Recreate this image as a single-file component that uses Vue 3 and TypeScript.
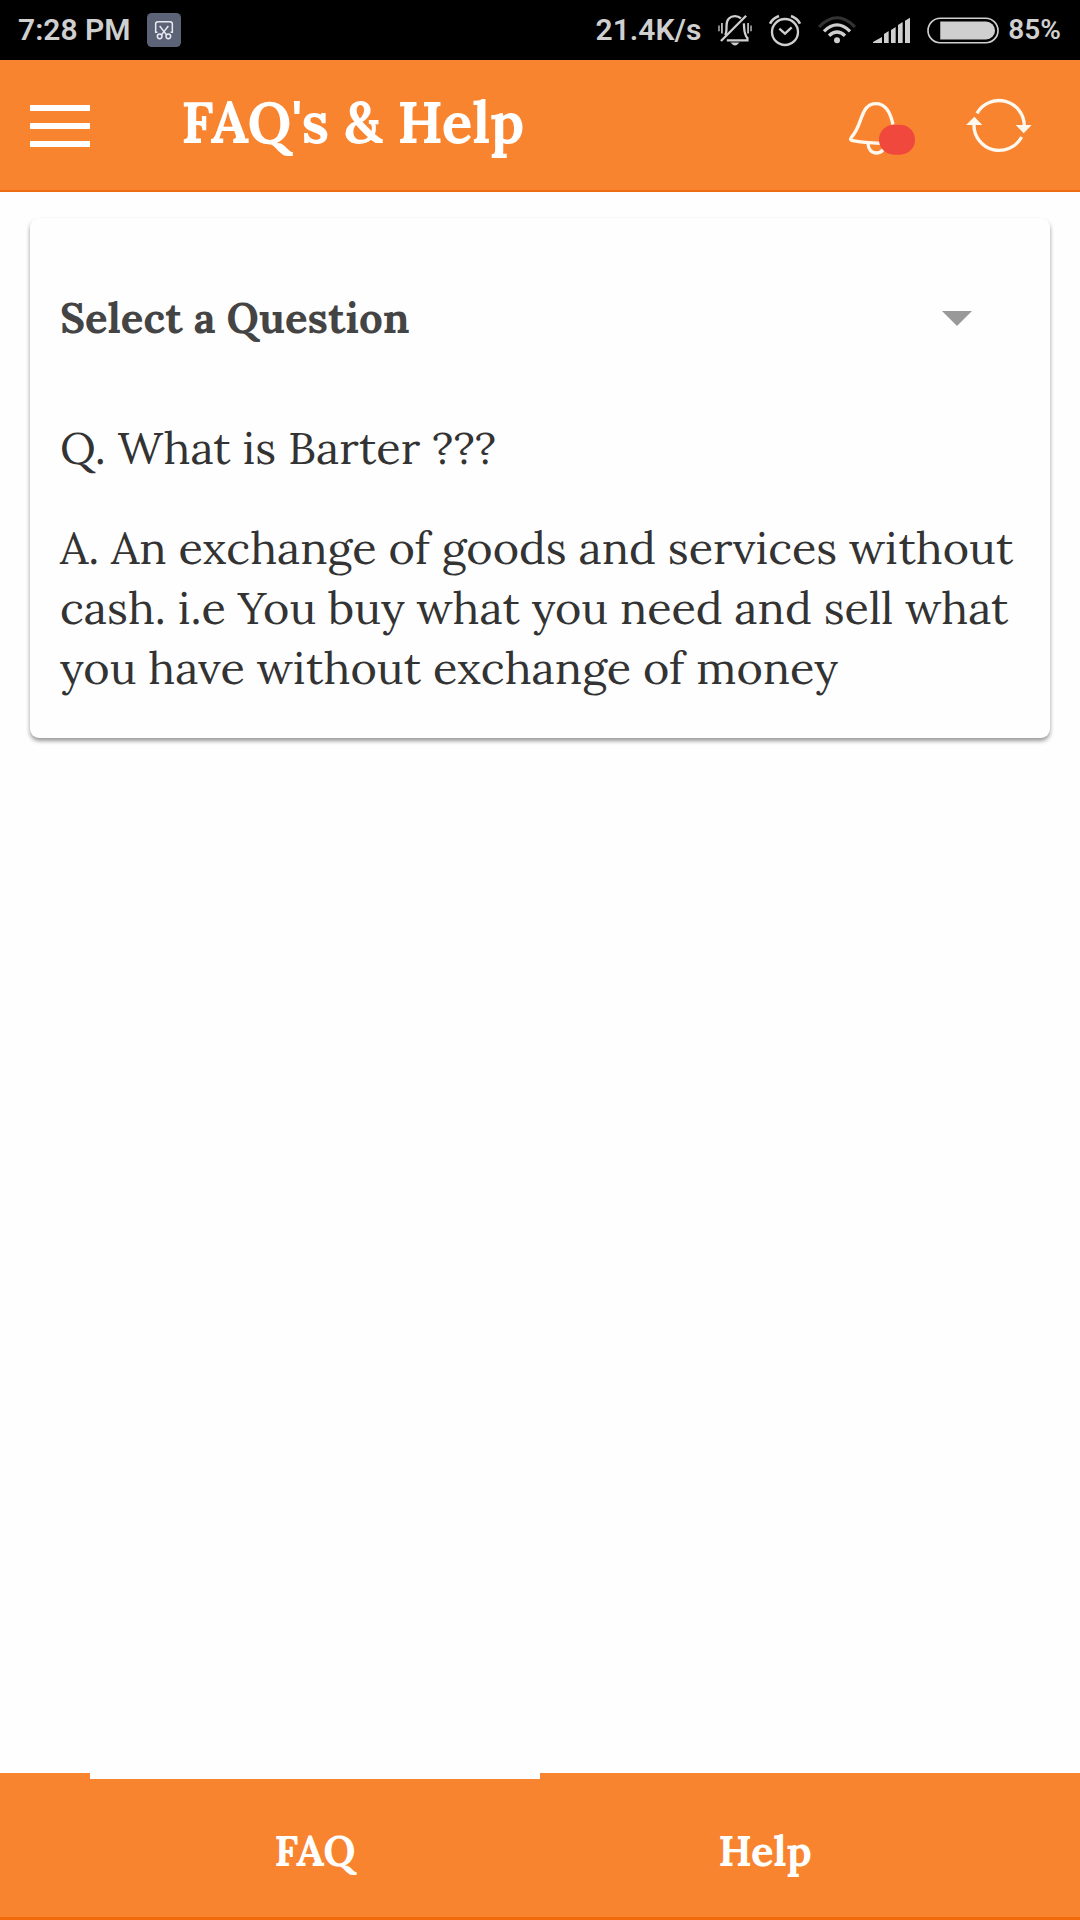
<script setup lang="ts">
import { ref } from 'vue'

interface Faq {
  question: string
  answer: string
}

const faq: Faq = {
  question: 'What is Barter ???',
  answer:
    'An exchange of goods and services without cash. i.e You buy what you need and sell what you have without exchange of money',
}

const tabs: string[] = ['FAQ', 'Help']
const activeTab = ref('FAQ')
const selected = ref('')
</script>

<template>
  <div class="screen">
    <div class="status">
      <span class="status-text">7:28 PM</span>
      <svg class="clip" viewBox="435 39 102 102" width="34" height="34" aria-hidden="true">
        <rect x="435" y="39" width="102" height="102" rx="14" fill="#5c6377" />
        <g fill="none" stroke="#e8ebf2" stroke-width="4.5">
          <path d="M466 97H461V72q0-7 7-7h36q7 0 7 7v25h-5" />
          <path d="M473 78l20 26M499 78l-20 26" />
          <circle cx="473" cy="109" r="7" />
          <circle cx="499" cy="109" r="7" />
        </g>
      </svg>
      <div class="status-right">
        <span class="status-text">21.4K/s</span>
        <svg viewBox="416 39 104 100" width="34" height="33" aria-hidden="true">
          <g fill="none" stroke="#cfcfcf" stroke-width="7">
            <path d="M438 103c5-8 4-18 4-28 0-20 11-30 26-30 8 0 14 3 18 7" />
            <path d="M495 67c2 16-1 32 11 45v7H443" />
            <path d="M425 121L502 44" />
            <path d="M428 66v32M508 66v32" stroke-width="5" />
            <path d="M419 74v17M517 74v17" stroke-width="4" />
          </g>
          <path d="M454 126h28q-14 17-28 0z" fill="#cfcfcf" />
        </svg>
        <svg viewBox="570 39 96 99" width="32" height="33" aria-hidden="true">
          <g fill="none" stroke="#cfcfcf" stroke-width="7">
            <circle cx="618" cy="93" r="39" />
            <path d="M601 83l17 15 20-19" />
            <path d="M573 68q8-16 27-23M663 68q-8-16-27-23" stroke-width="8" />
          </g>
        </svg>
        <svg viewBox="0 44 114 90" width="38" height="30" aria-hidden="true">
          <g fill="none" stroke="#cfcfcf" stroke-width="10">
            <path d="M3 80Q57 25 111 80" stroke="#333" stroke-width="9" />
            <path d="M18 93Q57 54 96 93" />
            <path d="M33 106Q57 84 81 106" />
          </g>
          <circle cx="57" cy="120" r="9" fill="#cfcfcf" />
        </svg>
        <svg viewBox="168 51 111 81" width="37" height="27" aria-hidden="true">
          <path
            d="M168 129v-3l27-15v18zM201 129v-27l14-9v36zM222 129V90l14-9v48zM243 129V75l14-9v63zM264 129V62l15-9v76z"
            fill="#cfcfcf"
          />
        </svg>
        <div class="power">
          <svg viewBox="323 50 217 80" width="72" height="27" aria-hidden="true">
            <rect x="326" y="53" width="211" height="74" rx="37" fill="none" stroke="#cfcfcf" stroke-width="5" />
            <path d="M363 63h138a27 27 0 0 1 0 54H363z" fill="#cfcfcf" />
          </svg>
          <span class="status-text battery">85%</span>
        </div>
      </div>
    </div>

    <header class="bar">
      <button class="icon-button" type="button" aria-label="Menu">
        <svg viewBox="0 -2 60 44" width="60" height="44">
          <path d="M0 3h60M0 21h60M0 39h60" stroke="#fff" stroke-width="6" />
        </svg>
      </button>
      <h1 class="title">FAQ's &amp; Help</h1>
      <div class="actions">
        <button class="icon-button" type="button" aria-label="Notifications">
          <svg viewBox="87 76 198 186" width="66" height="62">
            <g fill="none" stroke="#fff8ee" stroke-width="10" stroke-linejoin="round">
              <path d="M219 168C211 129 193 105 168 105c-27 0-36 20-46 48-8 23-15 39-27 52-5 6-4 10 3 11 27 5 55 7 84 8" />
              <path d="M144 224c1 18 11 29 25 29 9 0 16-4 21-10" />
            </g>
            <rect x="177" y="168" width="108" height="90" rx="45" fill="#f0483c" />
          </svg>
        </button>
        <button class="icon-button" type="button" aria-label="Refresh">
          <svg viewBox="438 75 198 180" width="66" height="60">
            <g fill="none" stroke="#fff8ee" stroke-width="10">
              <path d="M471 130A76 76 0 0 1 613 168" />
              <path d="M462 163A76 76 0 0 0 605 201" />
            </g>
            <path d="M438 165l25-25 24 25zM587 165h48l-24 25z" fill="#fff8ee" />
          </svg>
        </button>
      </div>
    </header>

    <main class="content">
      <section class="card">
        <div class="picker">
          <select v-model="selected" class="select" aria-label="Select a Question">
            <option value="">Select a Question</option>
            <option :value="faq.question">{{ faq.question }}</option>
          </select>
          <svg class="caret" viewBox="0 0 30 15" width="30" height="15" aria-hidden="true">
            <path d="M0 0h30L15 15z" fill="#999" />
          </svg>
        </div>
        <p class="text">Q. {{ faq.question }}</p>
        <p class="text">A. {{ faq.answer }}</p>
      </section>
    </main>

    <nav class="tabs">
      <button
        v-for="tab in tabs"
        :key="tab"
        type="button"
        class="tab"
        :class="{ active: tab === activeTab }"
        @click="activeTab = tab"
      >
        {{ tab }}
      </button>
    </nav>
  </div>
</template>

<style>
body {
  background: #fefefe;
}
</style>

<style scoped>
.screen {
  display: flex;
  flex-direction: column;
  min-height: 100vh;
  font-family: Lora, "Liberation Serif", serif;
}

svg {
  display: block;
  flex: none;
}

.status {
  display: flex;
  align-items: center;
  height: 60px;
  padding: 0 19px 0 18px;
  background: #000;
}

.status-text {
  font: 600 30px/36px Roboto, sans-serif;
  color: #cfcfcf;
  white-space: nowrap;
}

.battery {
  font-size: 28px;
}

.clip {
  margin-left: 16px;
}

.status-right {
  display: flex;
  align-items: center;
  gap: 17px;
  margin-left: auto;
}

.power {
  display: flex;
  align-items: center;
  gap: 9px;
}

.bar {
  display: flex;
  align-items: center;
  box-sizing: border-box;
  height: 132px;
  padding: 0 48px 0 30px;
  background: #f98430;
  border-bottom: 2px solid #ee6c12;
}

.icon-button {
  padding: 0;
  background: none;
  border: 0;
}

.title {
  flex: 1;
  margin: 0 0 0 91px;
  padding-bottom: 4px;
  font-size: 57px;
  font-weight: 700;
  line-height: 64px;
  color: #fff;
}

.actions {
  display: flex;
  align-items: center;
  gap: 51px;
}

.content {
  flex: 1;
  padding: 26px 30px;
}

.card {
  display: flex;
  flex-direction: column;
  gap: 40px;
  padding: 40px 30px;
  background: #fefefe;
  border-radius: 9px;
  box-shadow: 0 3px 4px rgba(0, 0, 0, 0.4);
}

.picker {
  display: grid;
  align-items: center;
}

.select,
.caret {
  grid-area: 1 / 1;
}

.select {
  height: 120px;
  padding: 0;
  font: inherit;
  font-size: 42px;
  font-weight: 700;
  color: #444;
  background: none;
  border: 0;
  appearance: none;
}

.caret {
  justify-self: end;
  margin-right: 48px;
  pointer-events: none;
}

.text {
  margin: 0;
  font-size: 45px;
  line-height: 60px;
  color: #333;
}

.tabs {
  display: flex;
  height: 144px;
  padding: 0 90px;
  background: #f98430;
  border-bottom: 3px solid #f06a0a;
}

.tab {
  flex: 1;
  padding: 6px 0 0;
  font: inherit;
  font-size: 42px;
  font-weight: 700;
  color: #fff;
  background: none;
  border: 0;
  border-top: 6px solid transparent;
}

.tab.active {
  border-top-color: #fefefe;
}
</style>
